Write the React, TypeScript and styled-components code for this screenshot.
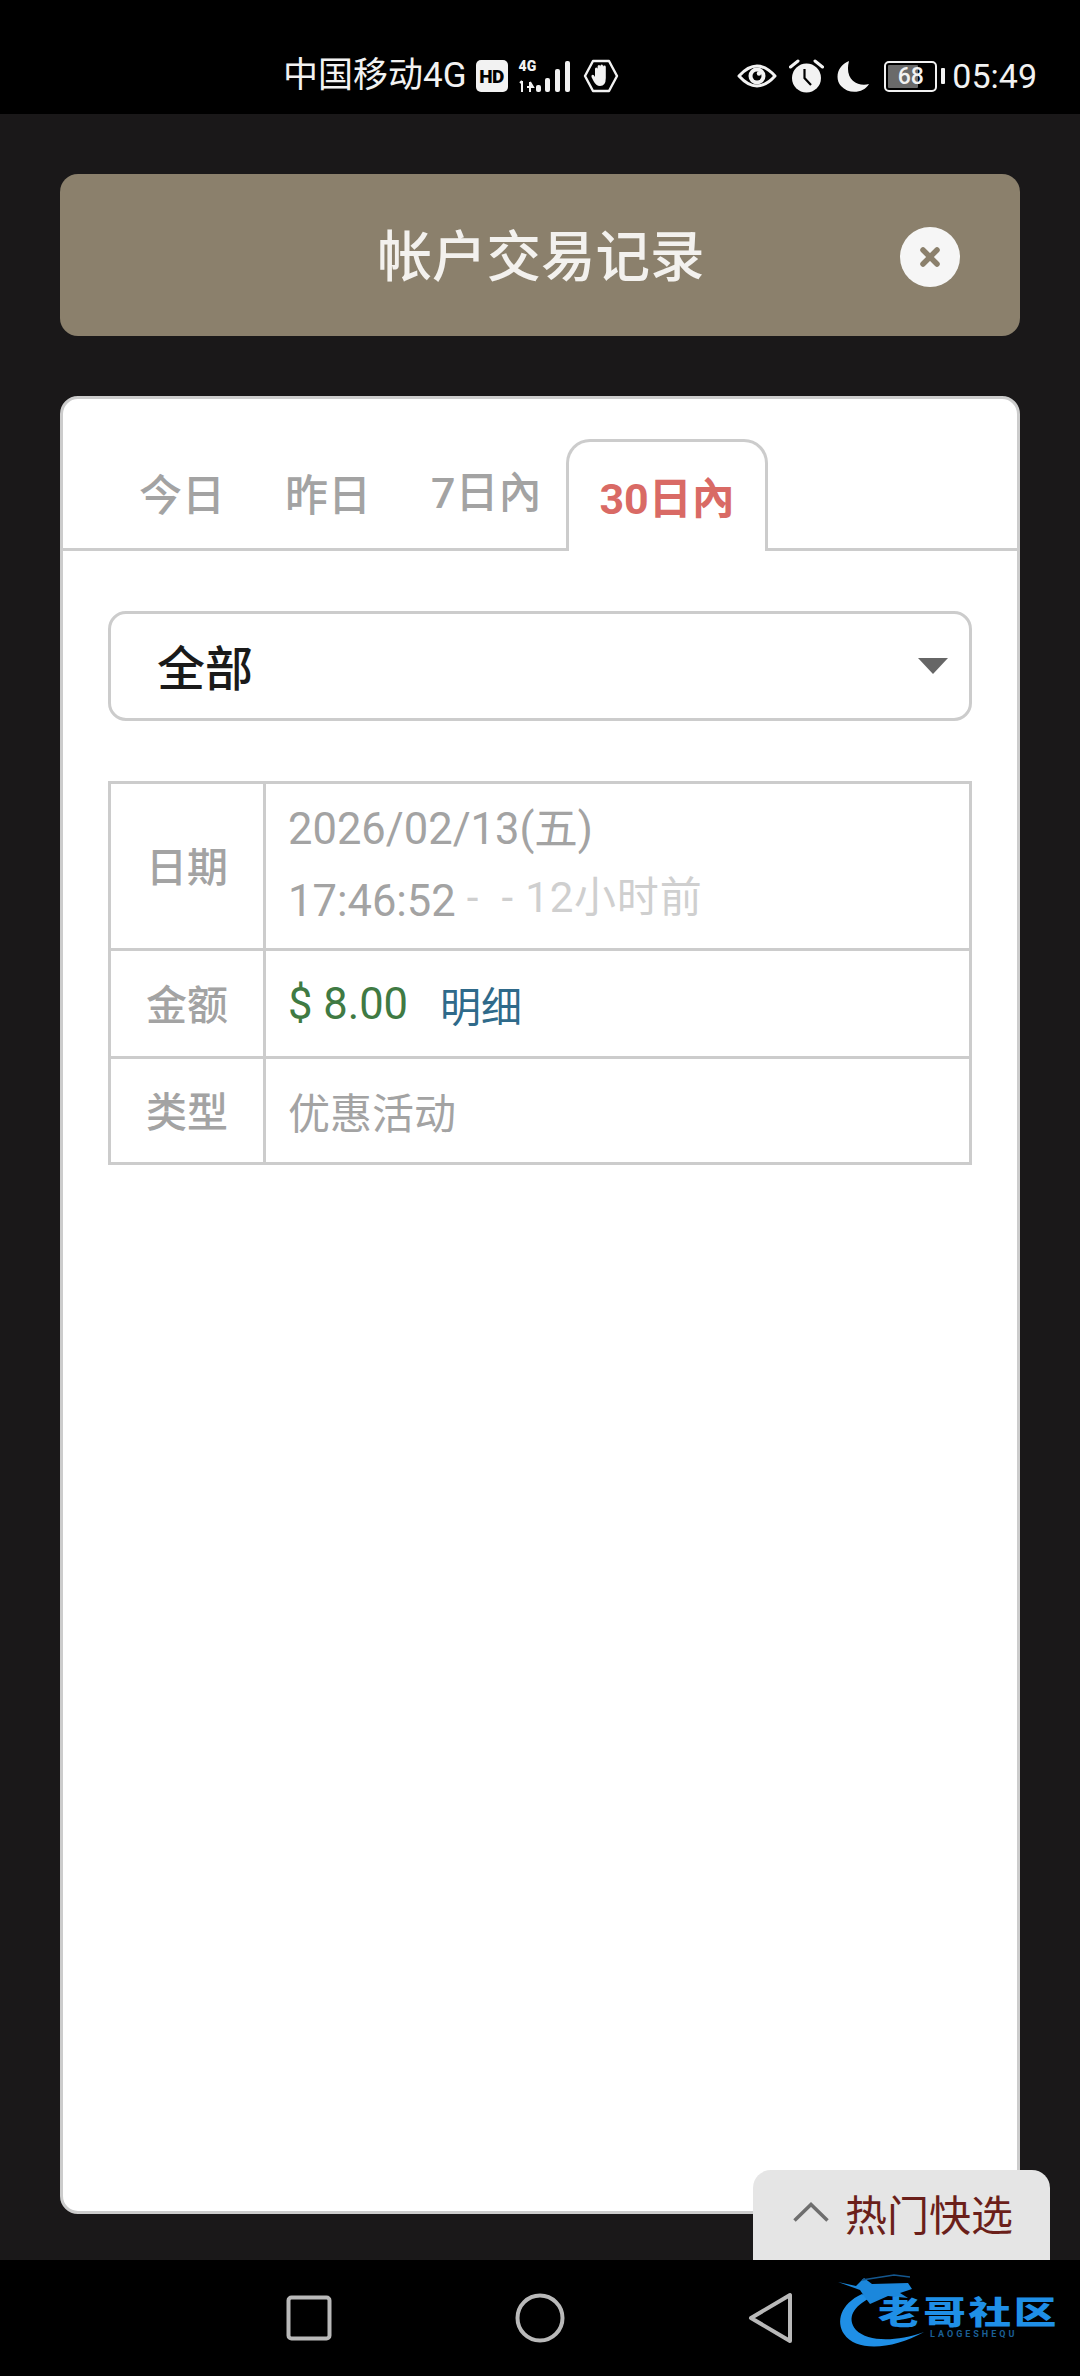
import React from "react"
import styled, { createGlobalStyle } from "styled-components"

const FONT = `Roboto, "Noto Sans CJK SC", "Noto Sans", sans-serif`

const GlobalStyle = createGlobalStyle`
  html, body {
    margin: 0;
    padding: 0;
    background: #000;
    font-family: ${FONT};
  }
  * {
    box-sizing: border-box;
  }
`

const tabs = [
  { label: "今日" },
  { label: "昨日" },
  { label: "7日內", raised: true },
  { label: "30日內", active: true },
]

export default function App() {
  return (
    <Screen>
      <GlobalStyle />
      <StatusBar>
        <Carrier>中国移动4G</Carrier>
        <HdIcon />
        <SignalIcon />
        <HandIcon />
        <StatusRight>
          <EyeIcon />
          <AlarmIcon />
          <MoonIcon />
          <Battery>
            <BatteryBody>
              <BatteryFill />
              <BatteryLevel>68</BatteryLevel>
            </BatteryBody>
            <BatteryNub />
          </Battery>
          <Clock>05:49</Clock>
        </StatusRight>
      </StatusBar>

      <Main>
        <Header>
          <Title>帐户交易记录</Title>
          <CloseButton>
            <svg width="24" height="24" viewBox="0 0 24 24">
              <path d="M5 5 L19 19 M19 5 L5 19" stroke="#8b806c" strokeWidth="5.5" strokeLinecap="round" />
            </svg>
          </CloseButton>
        </Header>

        <Card>
          <TabRow>
            {tabs.map((tab) => (
              <Tab key={tab.label} $active={tab.active} $raised={tab.raised}>
                <span>{tab.label}</span>
              </Tab>
            ))}
          </TabRow>

          <CardBody>
            <Select>
              <SelectValue>全部</SelectValue>
              <SelectArrow />
            </Select>

            <RecordTable>
              <RecordRow $height={167}>
                <RowLabel>日期</RowLabel>
                <RowValue>
                  <DateLine>2026/02/13(五)</DateLine>
                  <DateLine>
                    17:46:52<TimeAgo>- &nbsp;- 12小时前</TimeAgo>
                  </DateLine>
                </RowValue>
              </RecordRow>
              <RecordRow $height={108}>
                <RowLabel>金额</RowLabel>
                <RowValue>
                  <Amount>$ 8.00</Amount>
                  <DetailLink>明细</DetailLink>
                </RowValue>
              </RecordRow>
              <RecordRow $height={106}>
                <RowLabel>类型</RowLabel>
                <RowValue>优惠活动</RowValue>
              </RecordRow>
            </RecordTable>
          </CardBody>
        </Card>

        <QuickPick>
          <svg width="38" height="22" viewBox="0 0 38 22">
            <path d="M2.5 19.5 L19 3.5 L35.5 19.5" fill="none" stroke="#6e6e6e" strokeWidth="3.5" />
          </svg>
          <QuickPickLabel>热门快选</QuickPickLabel>
        </QuickPick>
      </Main>

      <NavBar>
        <svg width="46" height="46" viewBox="0 0 46 46">
          <rect x="2.5" y="2.5" width="41" height="41" rx="3" fill="none" stroke="#b9b9b9" strokeWidth="4" />
        </svg>
        <svg width="50" height="50" viewBox="0 0 50 50">
          <circle cx="25" cy="25" r="22.5" fill="none" stroke="#b9b9b9" strokeWidth="4" />
        </svg>
        <svg width="46" height="52" viewBox="0 0 46 52">
          <path d="M42 3 L42 49 L3 26 Z" fill="none" stroke="#b9b9b9" strokeWidth="4" strokeLinejoin="round" />
        </svg>
        <Logo>
          <svg width="230" height="84" viewBox="0 0 230 84">
            <path d="M26 22 C4 32 0 50 8 62 C20 80 56 78 88 60 C60 70 32 70 20 58 C10 46 18 34 34 26 Z" fill="#1f8fe6" />
            <path d="M2 10 L20 14 L28 6 L36 12 L72 11 L76 17 L64 21 L72 26 L52 24 L34 32 L28 24 L24 18 Z" fill="#1b87dc" />
            <path d="M26 8 L58 3 L74 5" fill="none" stroke="#14578f" strokeWidth="1.5" />
          </svg>
          <LogoText>老哥社区</LogoText>
          <LogoSubText>LAOGESHEQU</LogoSubText>
        </Logo>
      </NavBar>
    </Screen>
  )
}

const HdIcon = () => (
  <HdBadge>HD</HdBadge>
)

const SignalIcon = () => (
  <SignalWrap>
    <SignalType>4G</SignalType>
    <svg width="54" height="33" viewBox="0 0 54 33">
      <path d="M3 21 L3 32 M1 23 L3 21 M11 22 L11 32 M11 22 L14 27 L8 27" fill="none" stroke="#f2f2f2" strokeWidth="2" />
      <rect x="17" y="25" width="5" height="7" rx="2" fill="#f2f2f2" />
      <rect x="26" y="18" width="5" height="14" rx="2" fill="#f2f2f2" />
      <rect x="36" y="9" width="5" height="23" rx="2" fill="#f2f2f2" />
      <rect x="46" y="1" width="5" height="31" rx="2" fill="#f2f2f2" />
    </svg>
  </SignalWrap>
)

const HandIcon = () => (
  <svg width="36" height="34" viewBox="0 0 36 34">
    <path d="M10 2 L26 2 L34 17 L26 32 L10 32 L2 17 Z" fill="none" stroke="#f2f2f2" strokeWidth="2.4" strokeLinejoin="round" />
    <path
      d="M12 18 L12 10 Q12 8.5 13.3 8.5 Q14.6 8.5 14.6 10 L14.6 7.5 Q14.6 6 16 6 Q17.3 6 17.3 7.5 L17.3 7 Q17.3 5.5 18.8 5.5 Q20 5.5 20 7 L20 8 Q20 6.6 21.4 6.6 Q22.8 6.6 22.8 8 L22.8 19 Q22.8 27 17 27 Q13 27 10.5 22 L8.5 18 Q8 16 9.5 15.8 Q11 15.8 12 18 Z"
      fill="#f2f2f2"
    />
  </svg>
)

const EyeIcon = () => (
  <svg width="40" height="30" viewBox="0 0 40 30">
    <path d="M2 15 Q20 -5 38 15 Q20 35 2 15 Z" fill="none" stroke="#f2f2f2" strokeWidth="3" strokeLinejoin="round" />
    <circle cx="20" cy="15" r="8.5" fill="#f2f2f2" />
    <circle cx="20" cy="15" r="4.5" fill="#000" />
    <circle cx="22" cy="12.5" r="2.2" fill="#f2f2f2" />
  </svg>
)

const AlarmIcon = () => (
  <svg width="35" height="34" viewBox="0 0 35 34">
    <circle cx="17.5" cy="19" r="14.5" fill="#f2f2f2" />
    <path d="M1.5 8 L9 2 M33.5 8 L26 2" stroke="#f2f2f2" strokeWidth="3" strokeLinecap="round" />
    <path d="M15.5 10 L15.5 19 L22 26" fill="none" stroke="#000" strokeWidth="2.2" />
  </svg>
)

const MoonIcon = () => (
  <svg width="34" height="33" viewBox="0 0 34 33">
    <path d="M13 1 C2 5 -2 18 5 26 C13 35 28 33 33 24 C22 27 8 20 13 1 Z" fill="#f2f2f2" />
  </svg>
)

const Screen = styled.div`
  position: relative;
  display: flex;
  flex-direction: column;
  width: 1080px;
  height: 2376px;
  overflow: hidden;
  background: #000;
`

const StatusBar = styled.div`
  display: flex;
  align-items: center;
  height: 114px;
  flex-shrink: 0;
  padding: 38px 43px 0 283px;
  background: #000;
  color: #f2f2f2;
`

const Carrier = styled.div`
  font-size: 35px;
  line-height: 40px;
  white-space: nowrap;
`

const HdBadge = styled.div`
  display: flex;
  align-items: center;
  justify-content: center;
  width: 32px;
  height: 32px;
  margin-left: 9px;
  border-radius: 5px;
  background: #f2f2f2;
  color: #000;
  font-size: 19px;
  font-weight: 900;
  letter-spacing: -0.5px;
`

const SignalWrap = styled.div`
  position: relative;
  margin: 0 10px 0 11px;
  height: 33px;
`

const SignalType = styled.span`
  position: absolute;
  left: 0;
  top: -2px;
  font-size: 14px;
  line-height: 16px;
  font-weight: 900;
  color: #f2f2f2;
`

const StatusRight = styled.div`
  display: flex;
  align-items: center;
  margin-left: auto;
  gap: 12px;
`

const Battery = styled.div`
  display: flex;
  align-items: center;
  gap: 4px;
  margin-left: 2px;
`

const BatteryBody = styled.div`
  position: relative;
  width: 53px;
  height: 31px;
  border: 2.5px solid #f2f2f2;
  border-radius: 5px;
`

const BatteryFill = styled.div`
  position: absolute;
  left: 2px;
  top: 2px;
  bottom: 2px;
  width: 30px;
  background: #6a6a6a;
  border-radius: 1px;
`

const BatteryLevel = styled.span`
  position: absolute;
  inset: 0;
  display: flex;
  align-items: center;
  justify-content: center;
  font-size: 23px;
  font-weight: 500;
  color: #f2f2f2;
`

const BatteryNub = styled.div`
  width: 4px;
  height: 16px;
  background: #f2f2f2;
  border-radius: 1px;
`

const Clock = styled.div`
  margin-left: -5px;
  font-size: 34px;
  line-height: 40px;
`

const Main = styled.div`
  position: relative;
  flex: 1;
  display: flex;
  flex-direction: column;
  padding: 60px 60px 46px;
  background: #1a1819;
`

const Header = styled.div`
  position: relative;
  display: flex;
  align-items: center;
  justify-content: center;
  height: 162px;
  flex-shrink: 0;
  border-radius: 18px;
  background: #8b806c;
`

const Title = styled.h1`
  margin: 4px 0 0 2px;
  font-size: 54.5px;
  font-weight: 500;
  color: #f3f1ee;
  line-height: 64px;
`

const CloseButton = styled.div`
  position: absolute;
  right: 60px;
  top: 53px;
  display: flex;
  align-items: center;
  justify-content: center;
  width: 60px;
  height: 60px;
  border-radius: 50%;
  background: #f6f6f6;
`

const Card = styled.div`
  flex: 1;
  margin-top: 60px;
  border: 3px solid #cccccc;
  border-radius: 18px;
  background: #fff;
`

const TabRow = styled.div`
  display: flex;
  align-items: flex-end;
  height: 152px;
  padding-left: 46px;
  border-bottom: 3px solid #cccccc;
`

const Tab = styled.div<{ $active?: boolean; $raised?: boolean }>`
  display: flex;
  align-items: center;
  justify-content: center;
  height: ${(p) => (p.$active ? "112px" : "100px")};
  padding: 0 30px;
  margin-left: ${(p) => (p.$active ? "-5px" : "0")};
  margin-bottom: ${(p) => (p.$active ? "-3px" : "0")};
  font-size: 43px;
  line-height: 48px;
  font-weight: ${(p) => (p.$active ? 700 : 500)};
  color: ${(p) => (p.$active ? "#d96a65" : "#a3a3a3")};
  ${(p) =>
    p.$active
      ? `
    background: #fff;
    border: 3px solid #cccccc;
    border-bottom: 0;
    border-radius: 24px 24px 0 0;
  `
      : ""}

  span {
    position: relative;
    top: ${(p) => (p.$raised ? "-5px" : p.$active ? "2px" : "-2px")};
  }
`

const CardBody = styled.div`
  display: flex;
  flex-direction: column;
  gap: 60px;
  padding: 60px 45px 0;
`

const Select = styled.div`
  display: flex;
  align-items: center;
  justify-content: space-between;
  height: 110px;
  padding: 0 21px 0 46px;
  border: 3px solid #cccccc;
  border-radius: 18px;
`

const SelectValue = styled.div`
  margin-top: 7px;
  font-size: 48px;
  font-weight: 500;
  color: #1a1a1a;
  line-height: 56px;
`

const SelectArrow = styled.div`
  width: 0;
  height: 0;
  border-left: 15px solid transparent;
  border-right: 15px solid transparent;
  border-top: 16px solid #666;
`

const RecordTable = styled.div`
  display: flex;
  flex-direction: column;
  border: 3px solid #cccccc;
`

const RecordRow = styled.div<{ $height: number }>`
  display: flex;
  height: ${(p) => p.$height}px;
  border-top: 3px solid #cccccc;

  &:first-child {
    height: ${(p) => p.$height - 3}px;
    border-top: 0;
  }
`

const RowLabel = styled.div`
  display: flex;
  align-items: center;
  justify-content: center;
  width: 155px;
  flex-shrink: 0;
  padding-bottom: 4px;
  border-right: 3px solid #cccccc;
  font-size: 41px;
  font-weight: 500;
  color: #a3a3a3;
`

const RowValue = styled.div`
  flex: 1;
  display: flex;
  flex-wrap: wrap;
  align-content: center;
  align-items: center;
  padding-left: 22px;
  font-size: 42px;
  color: #a3a3a3;
`

const DateLine = styled.div`
  width: 100%;
  font-size: 43.5px;
  line-height: 72px;
  white-space: nowrap;
`

const TimeAgo = styled.span`
  position: relative;
  top: -4px;
  margin-left: 11px;
  color: #cfcfcf;
  font-size: 42px;
  letter-spacing: 0.8px;
`

const Amount = styled.span`
  position: relative;
  top: 1px;
  font-size: 43.5px;
  color: #3f7a43;
`

const DetailLink = styled.span`
  margin-left: 32px;
  font-size: 41px;
  color: #2f6a8a;
`

const QuickPick = styled.div`
  position: absolute;
  right: 30px;
  bottom: 0;
  display: flex;
  align-items: center;
  gap: 15px;
  width: 297px;
  height: 90px;
  padding: 0 0 6px 39px;
  border-radius: 18px 18px 0 0;
  background: #e5e5e5;
`

const QuickPickLabel = styled.span`
  font-size: 42px;
  color: #6b1f1a;
  white-space: nowrap;
`

const NavBar = styled.div`
  position: relative;
  display: flex;
  align-items: center;
  height: 116px;
  flex-shrink: 0;
  padding: 0 0 0 286px;
  gap: 183px;
  background: #000;
`

const Logo = styled.div`
  position: absolute;
  left: 836px;
  top: 12px;
  width: 230px;
  height: 84px;
`

const LogoText = styled.span`
  position: absolute;
  left: 42px;
  top: 26px;
  font-size: 32px;
  line-height: 30px;
  font-weight: 900;
  color: #1f8fe6;
  letter-spacing: 2px;
  white-space: nowrap;
  transform: scaleX(1.33);
  transform-origin: left center;
`

const LogoSubText = styled.span`
  position: absolute;
  left: 94px;
  top: 56px;
  font-size: 9px;
  line-height: 12px;
  letter-spacing: 3px;
  font-weight: 700;
  color: #1b5f95;
  white-space: nowrap;
`
